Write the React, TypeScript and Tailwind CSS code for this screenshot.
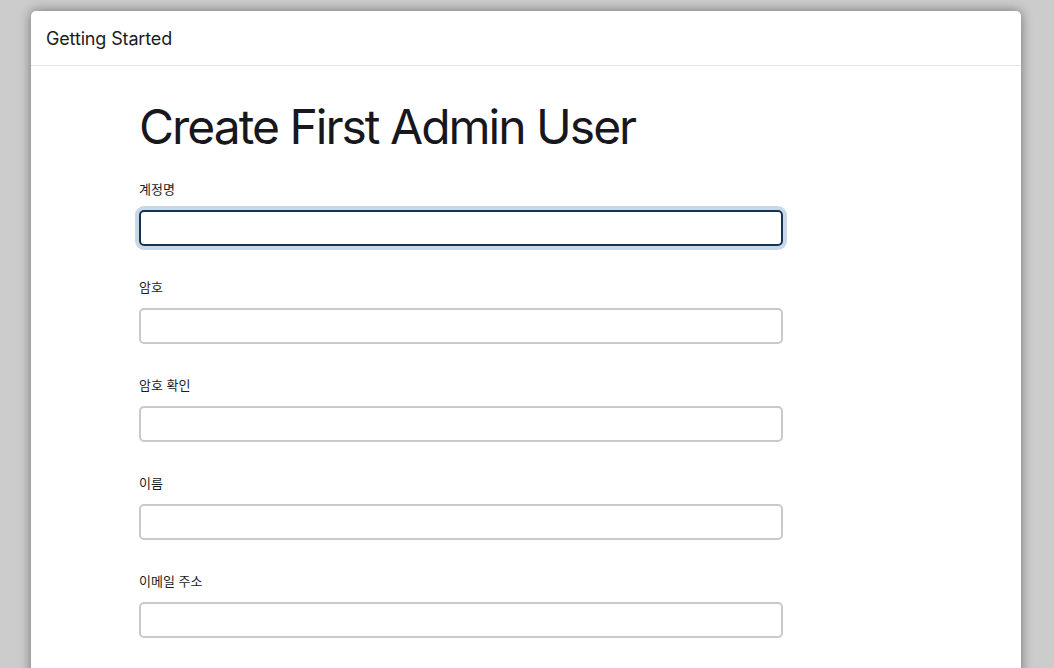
import React from "react";

const fields = ["계정명", "암호", "암호 확인", "이름", "이메일 주소"];

export default function App() {
  return (
    <div
      className="w-[1054px] h-[668px] overflow-hidden bg-[#cccccc] pt-[11px] pl-[31px]"
      style={{ fontFamily: 'Inter, "Noto Sans CJK KR", sans-serif' }}
    >
      <div className="w-[990px] h-[700px] bg-white rounded-t-[5px] shadow-[0_0_12px_rgba(0,0,0,0.45)]">
        <div className="h-[55px] border-b border-[#e3e3e3] flex items-center pl-[15px]">
          <span className="text-[18px] text-[#1b1b22] tracking-[-0.15px]">Getting Started</span>
        </div>
        <div className="pl-[108px] pt-[32px]">
          <h1 className="text-[48px] leading-[58px] text-[#171720] tracking-[-2px]">
            Create First Admin User
          </h1>
          <div className="mt-[25px] flex flex-col gap-[20px]">
            {fields.map((f, i) => (
              <div key={f} className="flex flex-col">
                <label className="text-[13px] leading-[16px] text-[#1b1b22] mb-[13px]">{f}</label>
                <div
                  className={
                    i === 0
                      ? "w-[644px] h-[36px] rounded-[5px] border-2 border-[#163356] shadow-[0_0_0_4px_#c8d8e8]"
                      : "w-[644px] h-[36px] rounded-[5px] border-2 border-[#c8c9cc]"
                  }
                />
                <div className="h-[13px]" />
              </div>
            ))}
          </div>
        </div>
      </div>
    </div>
  );
}
